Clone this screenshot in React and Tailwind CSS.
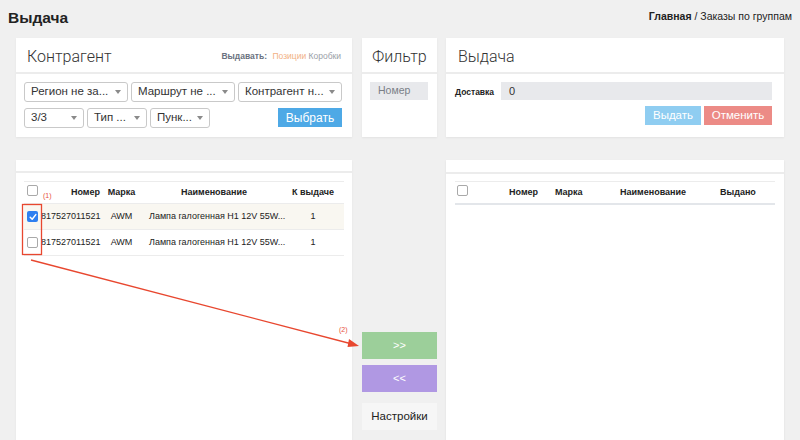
const sans = "font-['Liberation_Sans',Arial,sans-serif]";
const light = "font-['Roboto','Liberation_Sans',sans-serif] font-light";

function Caret() {
  return (
    <span className="ml-auto h-0 w-0 border-l-[3.5px] border-r-[3.5px] border-t-[4px] border-l-transparent border-r-transparent border-t-[#8a8a8a]" />
  );
}

function FakeSelect({ label, width }) {
  return (
    <div
      className={`flex h-[20px] items-center rounded-[3px] border border-[#c9c9c9] bg-white pl-[6px] pr-[6px] text-[11.5px] text-[#333] ${width}`}
    >
      <span className="whitespace-nowrap">{label}</span>
      <Caret />
    </div>
  );
}

function Box({ checked }) {
  if (checked) {
    return (
      <div className="flex h-[11px] w-[11px] items-center justify-center rounded-[2px] bg-[#2f7ff0]">
        <svg width="8" height="8" viewBox="0 0 8 8">
          <path d="M1.2 4.2 L3.2 6.2 L6.8 1.6" fill="none" stroke="white" strokeWidth="1.5" strokeLinecap="round" strokeLinejoin="round" />
        </svg>
      </div>
    );
  }
  return <div className="h-[11px] w-[11px] rounded-[2px] border border-[#a9a9a9] bg-white" />;
}

function PanelHead({ children, className = "" }) {
  return (
    <div className={`flex h-[34px] items-center bg-white pt-[3px] ${className}`}>{children}</div>
  );
}

function LeftTable() {
  const rows = [
    { checked: true, bg: "bg-[#f9f7f1]" },
    { checked: false, bg: "bg-white" },
  ];
  return (
    <div className="border-t border-[#ececec] text-[9px] text-[#222]">
      <div className="flex h-[22px] items-center border-b border-[#ececec] font-bold">
        <div className="w-[17px] pl-[3px] -mt-[4px]">
          <Box />
        </div>
        <div className="w-[62px] pr-[3px] text-right">Номер</div>
        <div className="w-[37px] text-center">Марка</div>
        <div className="w-[148px] text-center">Наименование</div>
        <div className="w-[50px] text-center">К выдаче</div>
      </div>
      {rows.map((r, i) => (
        <div key={i} className={`flex h-[26px] items-center border-b border-[#ececec] ${r.bg}`}>
          <div className="w-[17px] pl-[3px]">
            <Box checked={r.checked} />
          </div>
          <div className="w-[62px]">817527011521</div>
          <div className="w-[37px] text-center">AWM</div>
          <div className="w-[148px] whitespace-nowrap pl-[9px]">Лампа галогенная H1 12V 55W...</div>
          <div className="w-[50px] text-center">1</div>
        </div>
      ))}
    </div>
  );
}

function RightTable() {
  return (
    <div className="border-t border-[#ececec] text-[9px] font-bold text-[#222]">
      <div className="flex h-[23px] items-center border-b-2 border-[#e3e6ea]">
        <div className="w-[54px] pl-[2px] -mt-[4px]">
          <Box />
        </div>
        <div className="w-[46px]">Номер</div>
        <div className="w-[65px]">Марка</div>
        <div className="w-[100px]">Наименование</div>
        <div className="w-[55px]">Выдано</div>
      </div>
    </div>
  );
}

export default function App() {
  return (
    <div className={`relative h-[440px] w-[800px] overflow-hidden bg-[#f0f0f0] ${sans}`}>
      {/* top bar */}
      <div className="flex h-[38px] items-start justify-between px-[8px]">
        <h1 className="mt-[10px] text-[15.5px] font-bold leading-none text-[#222]">Выдача</h1>
        <div className="mt-[11px] text-[10.5px] leading-none text-[#222]">
          <span className="font-bold">Главная</span> / Заказы по группам
        </div>
      </div>

      {/* top panels */}
      <div className="flex items-start pl-[16px]">
        <div className="w-[336px] shadow-[0_1px_2px_rgba(0,0,0,0.06)]">
          <PanelHead className="justify-between pl-[11px] pr-[11px]">
            <span className={`${light} text-[16px] text-[#333]`}>Контрагент</span>
            <span className="text-[8.5px] whitespace-nowrap">
              <span className="font-bold text-[#6a7280]">Выдавать:</span>{" "}
              <span className="ml-[3px] text-[#f2b184]">Позиции</span>{" "}
              <span className="text-[#9aa0a8]">Коробки</span>
            </span>
          </PanelHead>
          <div className="h-[2px] bg-[#ececec]" />
          <div className="flex h-[63px] flex-col gap-[6px] bg-white pl-[8px] pr-[10px] pt-[8px]">
            <div className="flex gap-[3px]">
              <FakeSelect label="Регион не за..." width="w-[104px]" />
              <FakeSelect label="Маршрут не ..." width="w-[104px]" />
              <FakeSelect label="Контрагент н..." width="w-[104px]" />
            </div>
            <div className="flex gap-[3px]">
              <FakeSelect label="3/3" width="w-[60px]" />
              <FakeSelect label="Тип ..." width="w-[60px]" />
              <FakeSelect label="Пунк..." width="w-[60px]" />
              <button className="ml-auto flex h-[19px] w-[64px] items-center justify-center bg-[#4ea9e6] text-[12px] text-white">
                Выбрать
              </button>
            </div>
          </div>
        </div>

        <div className="ml-[10px] w-[75px] shadow-[0_1px_2px_rgba(0,0,0,0.06)]">
          <PanelHead className="justify-center">
            <span className={`${light} text-[16px] text-[#333]`}>Фильтр</span>
          </PanelHead>
          <div className="h-[2px] bg-[#ececec]" />
          <div className="h-[63px] bg-white pl-[8px] pt-[8px]">
            <div className="flex h-[18px] w-[58px] items-center bg-[#e8e9ec] pl-[8px] text-[10.5px] text-[#7a7f87]">
              Номер
            </div>
          </div>
        </div>

        <div className="ml-[9px] w-[338px] shadow-[0_1px_2px_rgba(0,0,0,0.06)]">
          <PanelHead className="pl-[12px]">
            <span className={`${light} text-[16px] text-[#333]`}>Выдача</span>
          </PanelHead>
          <div className="h-[2px] bg-[#ececec]" />
          <div className="flex h-[63px] flex-col bg-white pl-[9px] pr-[12px] pt-[8px]">
            <div className="flex items-start">
              <span className="mt-[4px] w-[46px] text-[8.5px] font-bold text-[#222]">Доставка</span>
              <div className="flex h-[18px] flex-1 items-center bg-[#e8e9ec] pl-[8px] text-[11px] text-[#333]">0</div>
            </div>
            <div className="mt-[6px] flex justify-end gap-[3px]">
              <button className="flex h-[19px] w-[56px] items-center justify-center bg-[#8fcdf1] text-[11.5px] text-white">
                Выдать
              </button>
              <button className="flex h-[19px] w-[68px] items-center justify-center bg-[#ec8b86] text-[11.5px] text-white">
                Отменить
              </button>
            </div>
          </div>
        </div>
      </div>

      {/* bottom panels */}
      <div className="mt-[23px] flex items-start pl-[16px]">
        <div className="w-[336px] shadow-[0_1px_2px_rgba(0,0,0,0.06)]">
          <div className="h-[11px] bg-white" />
          <div className="h-[2px] bg-[#ececec]" />
          <div className="h-[300px] bg-white px-[8px] pt-[8px]">
            <LeftTable />
          </div>
        </div>

        <div className="ml-[10px] flex w-[75px] flex-col pt-[172px]">
          <button className="flex h-[27px] items-center justify-center bg-[#9ccf9a] text-[11px] text-white">
            {">>"}
          </button>
          <button className="mt-[6px] flex h-[27px] items-center justify-center bg-[#b098e3] text-[11px] text-white">
            {"<<"}
          </button>
          <button className="mt-[11px] flex h-[27px] items-center justify-center bg-[#f6f6f6] text-[11.5px] text-[#222]">
            Настройки
          </button>
        </div>

        <div className="ml-[9px] w-[338px] shadow-[0_1px_2px_rgba(0,0,0,0.08)]">
          <div className="h-[12px] bg-white" />
          <div className="h-[2px] bg-[#ececec]" />
          <div className="h-[300px] bg-white pl-[9px] pr-[9px] pt-[7px]">
            <RightTable />
          </div>
        </div>
      </div>

      {/* annotations */}
      <span className="absolute left-[43px] top-[192px] text-[7px] leading-none text-[#e8513c]">(1)</span>
      <span className="absolute left-[339px] top-[326px] text-[7px] leading-none text-[#e8513c]">(2)</span>
      <svg className="pointer-events-none absolute left-0 top-0" width="800" height="440">
        <rect x="22.5" y="204.5" width="19" height="50" fill="none" stroke="#e8472f" strokeWidth="1.3" />
        <line x1="31" y1="260" x2="352" y2="344" stroke="#e8472f" strokeWidth="1.3" />
        <polygon points="359,346 349,339 347.5,347" fill="#e8472f" />
      </svg>
    </div>
  );
}
